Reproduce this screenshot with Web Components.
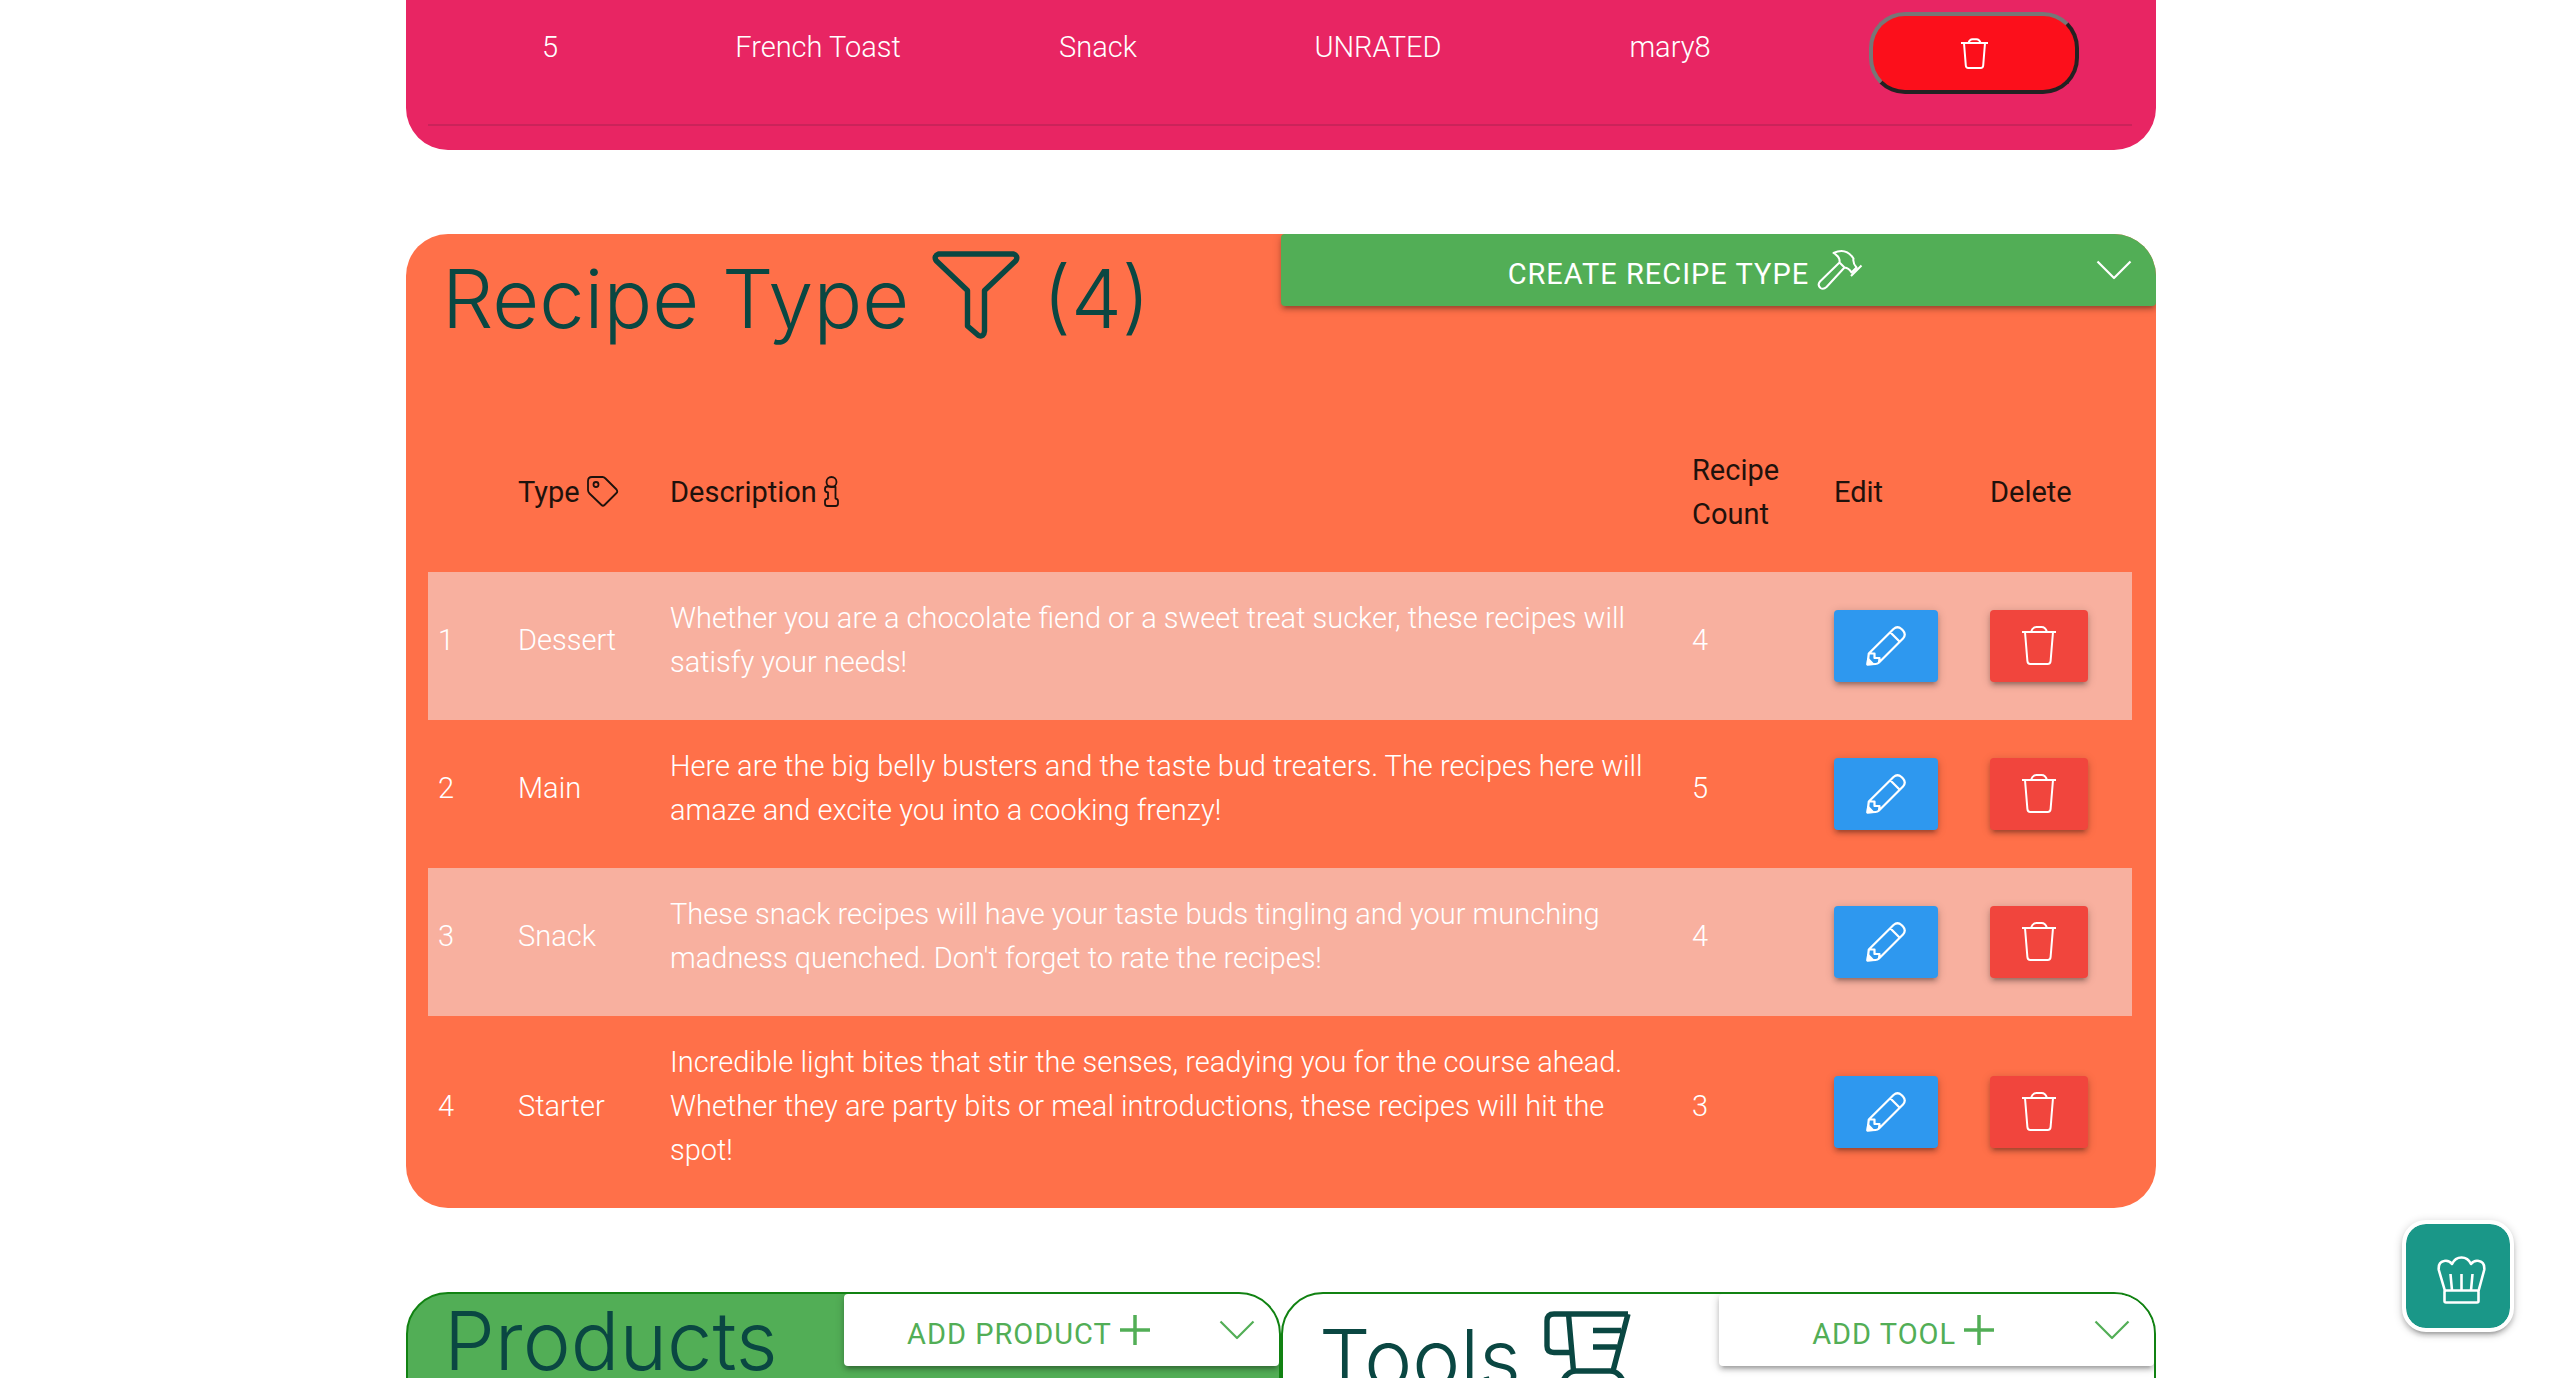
<!DOCTYPE html>
<html lang="en">
<head>
<meta charset="utf-8">
<title>Recipe admin</title>
<style>
  html, body { margin: 0; height: 100%; background: #fff; }
  body { font: 300 29px/44px Roboto, "Liberation Sans", sans-serif; color: #fff; }
</style>
</head>
<body>
<admin-page>
  <admin-card tone="pink" class="first"><rated-recipes></rated-recipes></admin-card>
  <admin-card tone="orange">
    <span slot="title">Recipe Type <ui-icon name="funnel"></ui-icon> (4)</span>
    <drop-button slot="action" tone="green">CREATE RECIPE TYPE <ui-icon name="hammer"></ui-icon></drop-button>
    <recipe-types></recipe-types>
  </admin-card>
  <card-pair>
    <admin-card tone="green" class="outlined">
      <span slot="title">Products</span>
      <drop-button slot="action">ADD PRODUCT <ui-icon name="plus"></ui-icon></drop-button>
    </admin-card>
    <admin-card tone="white" class="outlined">
      <span slot="title">Tools <ui-icon name="cup"></ui-icon></span>
      <drop-button slot="action">ADD TOOL <ui-icon name="plus"></ui-icon></drop-button>
    </admin-card>
  </card-pair>
  <chef-menu slot="floating"></chef-menu>
</admin-page>

<script>
const define = (name, html, setup) => {
  const template = document.createElement('template');
  template.innerHTML = html;
  customElements.define(name, class extends HTMLElement {
    constructor() {
      super();
      this.attachShadow({ mode: 'open' }).append(template.content.cloneNode(true));
    }
    connectedCallback() { if (setup) setup(this, this.shadowRoot); }
  });
};

/* name: [width, height, stroke width, vertical-align, shapes] */
const ICONS = {
  trash: [40, 40, 2, 0, '<path d="M3 6H37M6 6l2.400 29q.2 3 3 3h17.200q2.800 0 3-3L34 6M12 6q1.500-5 5.500-5h5q4 0 5.500 5"/>'],
  'trash-small': [31, 31, 2, 0, '<path d="M2 5H29M5 5l1.800 22.500q.2 2.500 2.500 2.500h12.400q2.300 0 2.500-2.500L26 5M9.500 5q1-3.800 4-3.800h4q3 0 4 3.800"/>'],
  pencil: [40, 40, 2.2, 0, '<path d="M1.500 38.500L2.800 27.500L27.500 3Q31.500-.5 35.500 3L37 4.500Q40.500 8.500 37 12.500L13 36.500Q11.500 38 9.500 38ZM24.500 6.500L33 15M3 27.500H8.500V32H13.500L13 36.500"/><path d="M1.500 38.500L2.200 33L7 38Z" fill="currentColor"/>'],
  hammer: [46, 42, 2, -7, '<path d="M16.500 4Q29-2 36.500 9.500Q35.500 14 39.500 18.500L34.500 23.500Q32 19 27.500 18.500L22.500 13.500Q23.500 8 16.500 4ZM44.500 16.500L34 27M22.500 13.500L3 32.500Q0 36 3.500 39Q6.500 41 9.500 38L27.500 18.500"/>'],
  plus: [30, 30, 3.500, -1, '<path d="M15 0V30M0 15H30"/>'],
  caret: [36, 20, 2.2, 0, '<path d="M1.500 1.500L18 18L34.500 1.500"/>'],
  funnel: [88, 88, 5.400, -11, '<path d="M6.500 3H81.500Q86.500 5 84 9.500L52.500 39.500V80Q52 86.500 46.500 84.500L35.500 75V39.500L4 9.500Q1.500 5 6.500 3Z"/>'],
  cup: [88, 96, 5.400, -19, '<path d="M84 3H10Q3 3 3 10V35Q3 41.500 10 41.500H27M24.500 3L29.500 60M84 3L69 60M49 19.500H77M49 36H73M14 88Q18 60 32 60H66Q80 60 84 88Z"/>'],
  tag: [32, 31, 1.800, -5, '<path d="M1 5Q1 1 5 1H15.500Q17 1 18.500 2.500L29.500 13.500Q31 15.500 29.500 17L17.500 29Q16 30.500 14.500 29L2.500 17.500Q1 16 1 14Z"/><circle cx="9" cy="8.500" r="2.500"/>'],
  info: [15, 31, 1.800, -5, '<circle cx="7.500" cy="6" r="5"/><path d="M4.500 10.500H3Q1 10.500 1 13V14Q1 16 4 16.500V22.500Q1 23 1 25V27.500Q1 30 3.500 30H11.500Q14 30 14 27.500V25Q14 23 11.500 22.500V11Z"/>'],
  hat: [50, 48, 2.600, 0, '<path d="M8 35L1.800 14Q1 6 7 5Q12 4 15 8Q18 1.500 24.500 1.500Q31 1.500 34 8Q37 4 42 5Q48 6 47.200 14L41.500 35M13.500 18L15 34.500M24.500 18V34.500M35.500 18L34 34.500"/><rect x="7.500" y="34.500" width="34" height="12" rx="1.500"/>']
};

define('ui-icon', `
  <style>:host{display:inline-block} svg{display:block;fill:none;stroke:currentColor;stroke-linejoin:round}</style>
`, (host, root) => {
  if (root.querySelector('svg')) return;
  const [w, h, stroke, align, shapes] = ICONS[host.getAttribute('name')];
  host.style.verticalAlign = align + 'px';
  root.innerHTML += `<svg width="${w}" height="${h}" viewBox="0 0 ${w} ${h}" stroke-width="${stroke}" aria-hidden="true">${shapes}</svg>`;
});

define('admin-page', `
  <style>
    :host { display: grid; grid-template-columns: 406fr 1750fr 402fr; height: 100vh; overflow-y: auto; scrollbar-width: none; }
    main { grid-column: 2; display: flex; flex-direction: column; gap: 84px; min-width: 0; }
  </style>
  <main><slot></slot></main><slot name="floating"></slot>
`);

define('card-pair', `
  <style>:host { display: grid; grid-template-columns: 1fr 1fr; }</style><slot></slot>
`);

define('admin-card', `
  <style>
    :host { display: block; flex: none; border-radius: 42px; overflow: hidden; }
    :host(.first) { margin-top: -18px; border-top-left-radius: 0; border-top-right-radius: 0; }
    :host(.outlined) { border: 2px solid #118212; min-height: 400px; }
    :host([tone=pink]) { background: #e82563; padding-bottom: 24px; }
    :host([tone=orange]) { background: #ff7049; }
    :host([tone=green]) { background: #52ae56; }
    :host([tone=white]) { background: #fff; }
    :host(.first) header { display: none; }
    header { display: grid; grid-template-columns: 1fr 1fr; align-items: start; height: 190px; }
    h2 { margin: 0; padding: 17px 0 0 36px; font: 300 81px/60px Inter, "Liberation Sans", sans-serif; color: #0a4742; white-space: nowrap; }
    .body { padding: 0 24px 0 22px; }
  </style>
  <header><h2><slot name="title"></slot></h2><slot name="action"></slot></header>
  <div class="body"><slot></slot></div>
`);

define('drop-button', `
  <style>
    :host { display: block; }
    button { display: flex; align-items: center; width: 100%; height: 72px; padding: 0 24px 0 0; border: 0; border-radius: 4px;
      background: #fff; color: #52ae56; font: 400 29px/72px Roboto, sans-serif; letter-spacing: 1px;
      box-shadow: 0 4px 4px 0 #00000024, 0 6px 2px -4px #0000001f, 0 2px 10px 0 #00000033; }
    :host([tone=green]) button { background: #52ae56; color: #fff; }
    span { flex: 1; padding: 8px 6px 0 0; }
  </style>
  <button type="button"><span><slot></slot></span><ui-icon name="caret"></ui-icon></button>
`);

const TABLE_CSS = `
  :host { display: block; }
  table { width: 100%; table-layout: fixed; border-collapse: collapse; }
  th, td { padding: 24px 10px 36px; text-align: left; vertical-align: middle; }
  .act { padding: 30px 10px; }
  button { display: flex; align-items: center; justify-content: center; color: #fff; padding: 0; }
`;

define('rated-recipes', `
  <style>${TABLE_CSS}
    tr { border-bottom: 2px solid #cb235a; }
    td { text-align: center; }
    button { width: 210px; height: 82px; margin: auto; background: #fc0f1b; border: 4px solid; border-color: #777 #222 #222 #777; border-radius: 36px; }
  </style>
  <table>
    <colgroup><col style="width:244px"><col style="width:292px"><col style="width:268px"><col style="width:292px"><col style="width:292px"><col style="width:316px"></colgroup>
    <tbody><tr><td>5</td><td>French Toast</td><td>Snack</td><td>UNRATED</td><td>mary8</td>
    <td class="act"><button type="button" aria-label="Delete recipe"><ui-icon name="trash-small"></ui-icon></button></td></tr></tbody>
  </table>
`);

const TYPES = [
  ['Dessert', 'Whether you are a chocolate fiend or a sweet treat sucker, these recipes will satisfy your needs!', 4],
  ['Main', 'Here are the big belly busters and the taste bud treaters. The recipes here will amaze and excite you into a cooking frenzy!', 5],
  ['Snack', "These snack recipes will have your taste buds tingling and your munching madness quenched. Don't forget to rate the recipes!", 4],
  ['Starter', 'Incredible light bites that stir the senses, readying you for the course ahead. Whether they are party bits or meal introductions, these recipes will hit the spot!', 3]
];

define('recipe-types', `
  <style>${TABLE_CSS}
    th { color: #1f120c; font-weight: 400; }
    tbody tr:nth-child(odd) { background: #f8b09f; }
    button { height: 72px; border: 0; border-radius: 4px;
      box-shadow: 0 4px 4px 0 #00000024, 0 6px 2px -4px #0000001f, 0 2px 10px 0 #00000033; }
    .edit { width: 104px; background: #2e98ef; }
    .delete { width: 98px; background: #f1453d; }
  </style>
  <table>
    <colgroup><col style="width:80px"><col style="width:152px"><col><col style="width:142px"><col style="width:156px"><col style="width:152px"></colgroup>
    <thead><tr><th></th><th>Type <ui-icon name="tag"></ui-icon></th><th>Description <ui-icon name="info"></ui-icon></th><th>Recipe Count</th><th>Edit</th><th>Delete</th></tr></thead>
    <tbody>${TYPES.map(([type, text, count], i) => `
      <tr><td>${i + 1}</td><td>${type}</td><td>${text}</td><td>${count}</td>
      <td class="act"><button type="button" class="edit" aria-label="Edit ${type}"><ui-icon name="pencil"></ui-icon></button></td>
      <td class="act"><button type="button" class="delete" aria-label="Delete ${type}"><ui-icon name="trash"></ui-icon></button></td></tr>`).join('')}
    </tbody>
  </table>
`);

define('chef-menu', `
  <style>
    :host { position: fixed; right: 44px; bottom: 46px; }
    button { display: grid; place-items: center; width: 112px; height: 112px; padding: 8px 0 0 8px; border: 4px solid #fff; border-radius: 24px;
      background: #1a9788; background-clip: padding-box; color: #fff; box-shadow: 0 4px 4px 0 #00000024, 0 6px 2px -4px #0000001f, 0 2px 10px 0 #00000033; }
  </style>
  <button type="button" aria-label="Menu"><ui-icon name="hat"></ui-icon></button>
`);
</script>
</body>
</html>
